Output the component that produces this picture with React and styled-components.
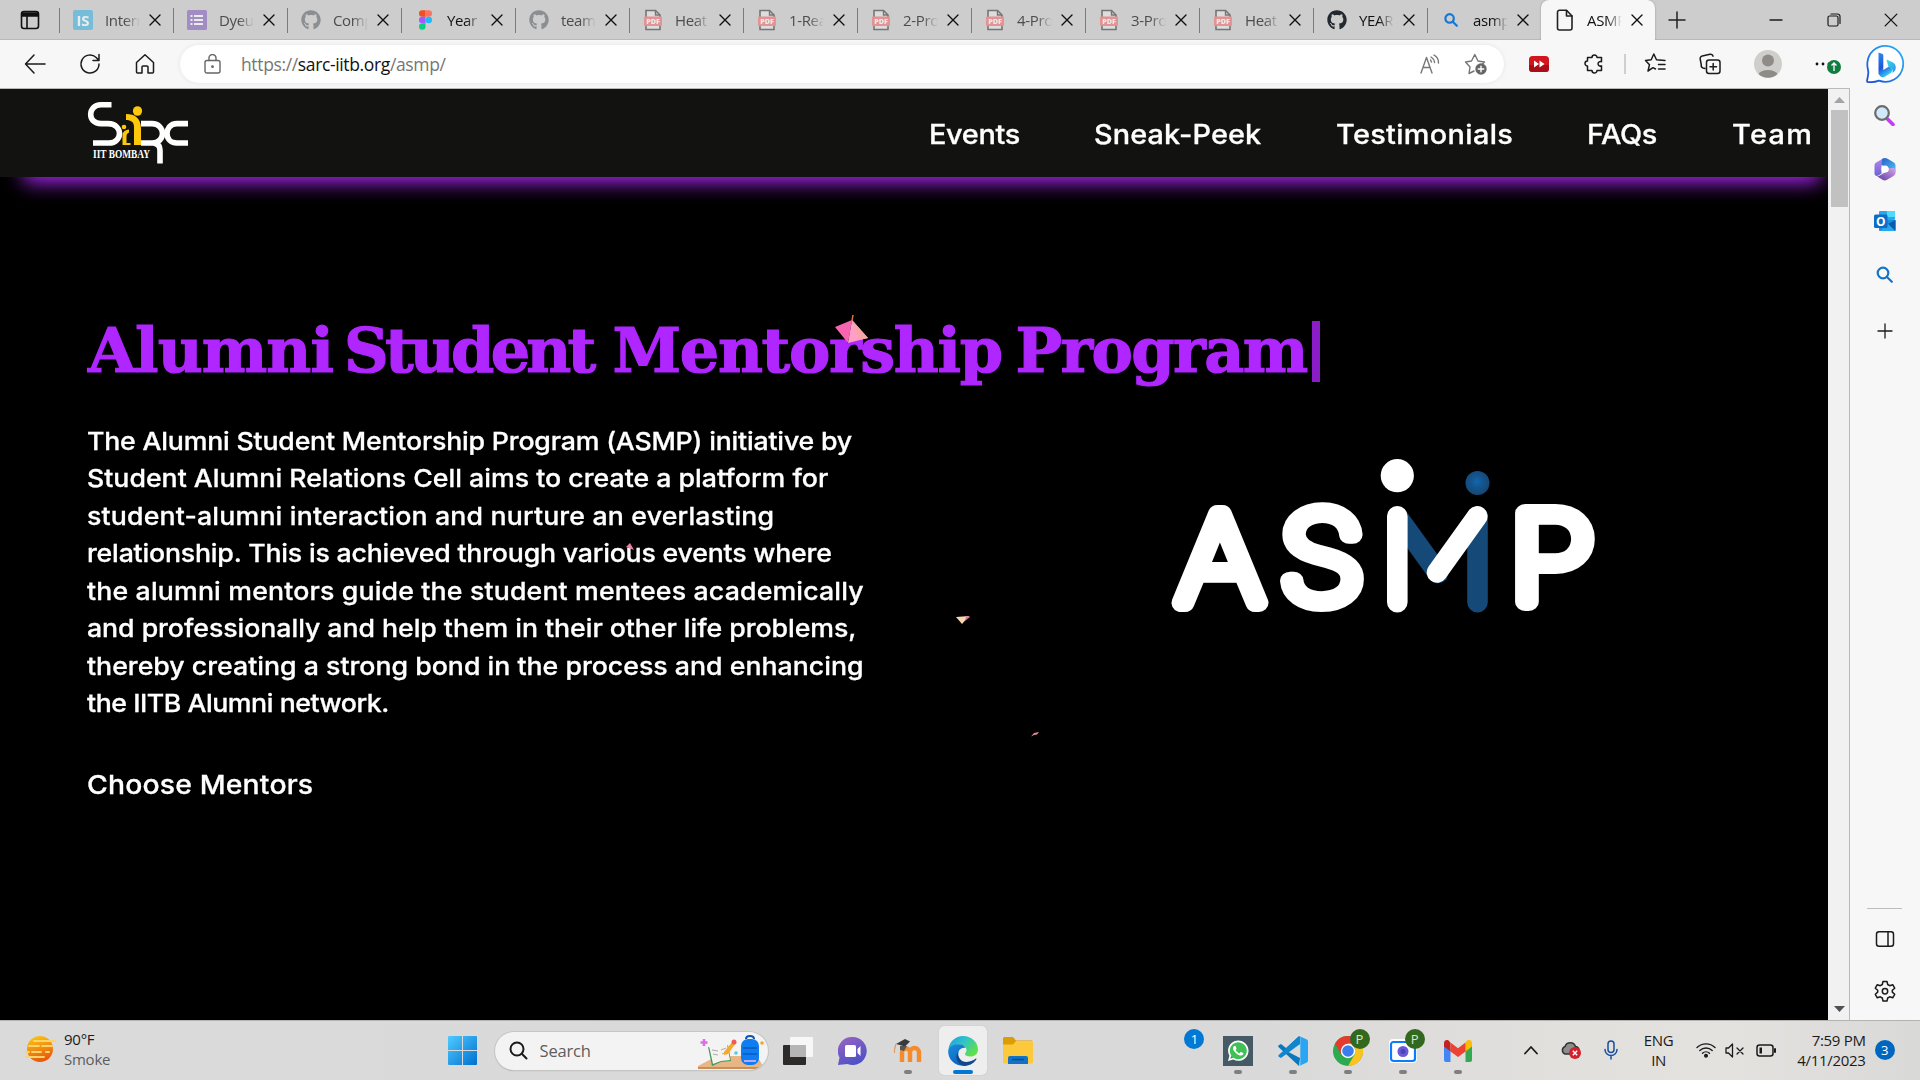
import React from 'react';
import styled, { createGlobalStyle, css } from 'styled-components';
import { FaGithub, FaWhatsapp } from 'react-icons/fa';

const UI = `"Open Sans", "Noto Sans", sans-serif`;
const SITE = `Inter, "Open Sans", sans-serif`;

const Global = createGlobalStyle`
  * { box-sizing: border-box; }
  html, body { margin: 0; padding: 0; }
  body { background: #000; overflow: hidden; font-family: ${UI}; }
  svg { display: block; flex: none; }
`;

/* ---------- window shell ---------- */

const Desktop = styled.div`
  width: 1920px;
  height: 1080px;
  display: flex;
  flex-direction: column;
  overflow: hidden;
`;

const TabStrip = styled.div`
  height: 40px;
  flex: none;
  display: flex;
  background: #cdcdcd;
  box-shadow: inset 0 -1px 0 #b9b9b9;
`;

const TabActions = styled.div`
  width: 59px;
  display: flex;
  align-items: center;
  justify-content: center;
`;

const Tab = styled.div`
  width: 114px;
  height: 40px;
  flex: none;
  display: flex;
  align-items: center;
  padding-left: 14px;
  ${p => p.$active ? css`
    background: #f7f7f7;
    border-radius: 8px 8px 0 0;
    box-shadow: 0 0 2px rgba(0, 0, 0, 0.3);
    clip-path: inset(-4px -4px 0 -4px);
  ` : css`
    background: linear-gradient(#7b7b7b, #7b7b7b) 0 8px / 1px 25px no-repeat;
  `}
`;

const Favicon = styled.div`
  width: 20px;
  height: 20px;
  display: flex;
  align-items: center;
  justify-content: center;
  opacity: ${p => (p.$asleep ? 0.6 : 1)};
`;

const TabTitle = styled.span`
  width: 35px;
  margin: 0 9px 0 12px;
  overflow: hidden;
  white-space: nowrap;
  font-size: 15px;
  line-height: 24px;
  letter-spacing: -0.35px;
  color: ${p => (p.$asleep ? '#4c4c4c' : '#111')};
  mask-image: linear-gradient(90deg, #000 55%, transparent 100%);
`;

const Flex = styled.div`
  flex: 1;
`;

const WindowButton = styled.div`
  width: 57.5px;
  display: flex;
  align-items: center;
  justify-content: center;
`;

const NewTab = styled.div`
  width: 44px;
  display: flex;
  align-items: center;
  justify-content: center;
`;

const Browser = styled.div`
  flex: 1;
  min-height: 0;
  display: flex;
  background: #f7f7f7;
`;

const MainColumn = styled.div`
  width: 1850px;
  display: flex;
  flex-direction: column;
`;

const Toolbar = styled.div`
  height: 48px;
  flex: none;
  display: flex;
  align-items: center;
  padding: 0 0 1px 7.5px;
`;

const ToolSlot = styled.div`
  width: ${p => p.$w || 55}px;
  flex: none;
  display: flex;
  align-items: center;
  justify-content: center;
  position: relative;
`;

const AddressBar = styled.div`
  width: 1324px;
  flex: none;
  height: 38px;
  margin: 0 7.5px 0 7.5px;
  border-radius: 19px;
  background: #fff;
  box-shadow: 0 0 5px rgba(0, 0, 0, 0.08);
  display: flex;
  align-items: center;
  padding: 0 6px 0 24px;
`;

const Url = styled.span`
  margin-left: 20px;
  font-size: 17.5px;
  letter-spacing: -0.36px;
  color: #767676;
  b { font-weight: 400; color: #111; }
`;

const ToolDivider = styled.div`
  width: 2px;
  height: 20px;
  background: #cfcfcf;
`;

const UpdateBadge = styled.div`
  position: absolute;
  left: 30px;
  top: 4px;
`;

/* ---------- page ---------- */

const Viewport = styled.div`
  flex: 1;
  min-height: 0;
  display: flex;
  border: solid #b9b9b9;
  border-width: 1px 1px 0 0;
`;

const Page = styled.div`
  width: 1828px;
  background: #000;
  color: #fff;
  font-family: ${SITE};
  position: relative;
  overflow: hidden;
`;

const SiteHeader = styled.header`
  height: 88px;
  background: #121210;
  box-shadow: 8px 21px 20px -16px #b026ff;
  display: flex;
  align-items: center;
  justify-content: space-between;
  padding: 0 17px 0 86px;
`;

const Nav = styled.nav`
  display: flex;
  gap: 75px;
`;

const wideText = css`
  font-weight: 500;
  -webkit-text-stroke: 0.3px #fff;
  transform: scaleX(1.09);
  transform-origin: left;
  letter-spacing: ${p => p.$ls || 0}px;
`;

const NavLink = styled.a`
  width: ${p => p.$w}px;
  white-space: nowrap;
  font-size: 26.5px;
  line-height: 40px;
  padding-top: 1px;
  ${wideText}
`;

const Hero = styled.main`
  padding: 134px 0 0 87px;
`;

const Title = styled.h1`
  margin: 0;
  height: 80px;
  padding-left: 1px;
  display: flex;
  align-items: center;
  font-family: "DejaVu Serif", serif;
  font-weight: 700;
  font-size: 62px;
  line-height: 80px;
  color: #b026ff;
  -webkit-text-stroke: 1.2px #b026ff;
  white-space: pre;
`;

const TitleWord = styled.span`
  width: ${p => p.$w}px;
  letter-spacing: ${p => p.$ls}px;
`;

const Caret = styled.span`
  width: 8px;
  height: 61px;
  background: #8a1dc8;
`;

const HeroRow = styled.div`
  display: flex;
  justify-content: space-between;
  padding: 32px 232px 0 0;
`;

const Copy = styled.div`
  width: 820px;
`;

const Line = styled.div`
  font-size: 24.5px;
  line-height: 37.45px;
  white-space: nowrap;
  ${wideText}
`;

const Choose = styled.a`
  display: block;
  margin-top: 40px;
  font-size: 26px;
  line-height: 44px;
  ${wideText}
`;

const LogoBox = styled.div`
  padding-top: 33px;
`;

const Confetti = styled.svg`
  position: absolute;
  left: ${p => p.$x}px;
  top: ${p => p.$y}px;
`;

const Scrollbar = styled.div`
  width: 21px;
  background: #f1f1f1;
  display: flex;
  flex-direction: column;
  align-items: center;
  padding: 8px 1px 8px 2px;
`;

const Thumb = styled.div`
  width: 17px;
  height: 97px;
  margin-top: 7px;
  background: #c1c1c1;
`;

const Sidebar = styled.aside`
  flex: 1;
  display: flex;
  flex-direction: column;
  align-items: center;
  padding: 3px 1px 8px 0;
`;

const SideSlot = styled.div`
  height: ${p => p.$h || 53}px;
  display: flex;
  align-items: center;
  justify-content: center;
`;

const SideRule = styled.div`
  width: 35px;
  height: 1px;
  background: #bdbdbd;
`;

/* ---------- taskbar ---------- */

const Taskbar = styled.footer`
  height: 60px;
  flex: none;
  display: flex;
  align-items: center;
  border-top: 1px solid #b5b3b1;
  background: linear-gradient(90deg, #dadada 0%, #d9d9d9 65%, #e2e0dd 82%, #e4e2df 90%, #d9d9d8 100%);
`;

const Weather = styled.div`
  width: 434.5px;
  flex: none;
  padding: 0 0 3px 24px;
  display: flex;
  align-items: center;
  gap: 8px;
`;

const Stack = styled.div`
  display: flex;
  flex-direction: column;
  align-items: ${p => p.$align || 'flex-start'};
  font-size: 15px;
  line-height: 20px;
  letter-spacing: ${p => p.$ls || -0.3}px;
  color: #1b1b1b;
  span + span { color: ${p => p.$second || '#1b1b1b'}; }
`;

const AppSlot = styled.div`
  width: 55.05px;
  height: 59px;
  flex: none;
  display: flex;
  align-items: center;
  justify-content: center;
  position: relative;
`;

const AppTile = styled.div`
  width: 48px;
  height: 49px;
  border-radius: 5px;
  display: flex;
  align-items: center;
  justify-content: center;
  ${p => p.$active && css`background: #eeeeee; box-shadow: 0 0 1px #aaa;`}
`;

const RunMark = styled.div`
  position: absolute;
  bottom: 6px;
  width: ${p => (p.$active ? 20 : 8)}px;
  height: 4px;
  border-radius: 2px;
  background: ${p => (p.$active ? '#0078d4' : '#7f7f7f')};
`;

const Badge = styled.div`
  position: absolute;
  left: 29px;
  top: 8px;
  width: 20px;
  height: 20px;
  border-radius: 50%;
  background: ${p => p.$bg};
  color: ${p => p.$fg || '#fff'};
  font-size: 13px;
  line-height: 20px;
  text-align: center;
`;

const SearchBox = styled.div`
  width: 273px;
  flex: none;
  height: 38px;
  margin: 0 2.5px 0 5px;
  border-radius: 19px;
  background: #f3f3f3;
  box-shadow: 0 0 0 1px #c6c6c6, 0 1px 1px #999;
  display: flex;
  align-items: center;
  padding: 0 4px 0 14px;
  overflow: hidden;
`;

const SearchText = styled.span`
  flex: 1;
  margin-left: 12px;
  font-size: 16.5px;
  letter-spacing: -0.2px;
  color: #5d5d5d;
`;

const Tray = styled.div`
  flex: 1;
  display: flex;
  align-items: center;
  padding-bottom: 1px;
`;

const TraySlot = styled.div`
  width: ${p => p.$w}px;
  flex: none;
  display: flex;
  align-items: center;
  justify-content: ${p => p.$end ? 'flex-end' : 'center'};
`;

const NoticeCount = styled.div`
  width: 20px;
  height: 20px;
  flex: none;
  margin-left: 9px;
  border-radius: 50%;
  background: #0067c0;
  color: #fff;
  font-size: 13px;
  line-height: 20px;
  text-align: center;
`;

/* ---------- icons ---------- */

const Ic = ({ s = 24, w, h, c = '#1b1b1b', sw = 1.5, vb = '0 0 24 24', children }) => (
  <svg width={w || s} height={h || s} viewBox={vb} fill="none" stroke={c} strokeWidth={sw} strokeLinecap="round" strokeLinejoin="round">{children}</svg>
);

const CloseX = ({ s = 12, sw = 1.4, c = '#111' }) => (
  <Ic s={s} vb="0 0 12 12" sw={sw} c={c}><path d="M1 1L11 11M11 1L1 11" /></Ic>
);

const PdfIcon = () => (
  <svg width="20" height="22" viewBox="0 0 20 22">
    <path d="M3 1.5h9.5L17 6v14.5H3z" fill="#e8e8e8" stroke="#3b3b3b" strokeWidth="1.6" />
    <path d="M12.5 1.5V6H17" fill="none" stroke="#3b3b3b" strokeWidth="1.4" />
    <rect x="1" y="7.5" width="18" height="9.5" rx="1" fill="#f26d6d" />
    <text x="10" y="15" textAnchor="middle" fontFamily="Open Sans, sans-serif" fontWeight="800" fontSize="7.2" fill="#fff">PDF</text>
  </svg>
);

const favicons = {
  is: (
    <svg width="20" height="20" viewBox="0 0 20 20">
      <rect width="20" height="20" rx="2" fill="#3db3e3" />
      <text x="10" y="15.5" textAnchor="middle" fontFamily="Open Sans, sans-serif" fontWeight="700" fontSize="15" fill="#fff">IS</text>
    </svg>
  ),
  form: (
    <svg width="20" height="20" viewBox="0 0 20 20">
      <rect width="20" height="20" rx="1.5" fill="#8462bd" />
      <path d="M7 6h9M7 10h9M7 14h9" stroke="#fff" strokeWidth="2" />
      <path d="M3.5 6h2M3.5 10h2M3.5 14h2" stroke="#fff" strokeWidth="2" />
    </svg>
  ),
  github: <FaGithub size={20} color="#60666b" />,
  githubDark: <FaGithub size={20} color="#24292f" />,
  figma: (
    <svg width="13" height="20" viewBox="0 0 12 18">
      <path d="M3 0h3v6H3a3 3 0 0 1 0-6z" fill="#f24e1e" />
      <path d="M6 0h3a3 3 0 0 1 0 6H6z" fill="#ff7262" />
      <path d="M3 6h3v6H3a3 3 0 0 1 0-6z" fill="#a259ff" />
      <circle cx="9" cy="9" r="3" fill="#1abcfe" />
      <path d="M3 12h3v3a3 3 0 1 1-3-3z" fill="#0acf83" />
    </svg>
  ),
  pdf: <PdfIcon />,
  search: <Ic s={14} vb="0 0 14 14" c="#1876d2" sw={2.2}><circle cx="5.6" cy="5.4" r="4.2" /><path d="M8.8 8.8L12.8 12.8" /></Ic>,
  page: <Ic w={18} h={22} vb="0 0 18 22" c="#222" sw={1.6}><path d="M3.5 1.2h7L16 7v12a2 2 0 0 1-2 2H3.500a2 2 0 0 1-2-2V3.200a2 2 0 0 1 2-2z" /><path d="M10.500 1.500V7H16" /></Ic>,
};

const BingLogo = () => (
  <svg width="40" height="40" viewBox="0 0 40 40">
    <defs>
      <linearGradient id="bingRing" x1="0" y1="1" x2="1" y2="0">
        <stop offset="0" stopColor="#1b4ad8" /><stop offset="0.5" stopColor="#2387e8" /><stop offset="1" stopColor="#32b3f2" />
      </linearGradient>
      <linearGradient id="bingB" x1="0" y1="0" x2="0.4" y2="1">
        <stop offset="0" stopColor="#2f8df0" /><stop offset="0.6" stopColor="#1e55dc" /><stop offset="1" stopColor="#38c8f2" />
      </linearGradient>
      <linearGradient id="bingT" x1="0" y1="0" x2="1" y2="1">
        <stop offset="0" stopColor="#34e0e6" /><stop offset="1" stopColor="#2f8ff0" />
      </linearGradient>
    </defs>
    <path d="M20.500 1.800a18 18 0 1 1-6.500 34.900C10.500 38 5.500 38.400 2.300 37.800 1.400 37.600 2.600 35.500 3.200 30 4 27 1.800 24 2.400 18.500A18 18 0 0 1 20.500 1.800z" fill="#fff" stroke="url(#bingRing)" strokeWidth="1.800" />
    <path d="M13.500 8.500l3.500 1.300c.8.300 1.300 1 1.300 1.900V26l6.500-4 2.500 3.500c0 2-.8 3-2 3.800l-6 3.800c-1.200.7-2.300.5-3.500-.3L13.500 30z" fill="url(#bingB)" />
    <path d="M21.500 15.500l6 2.800c2.300 1.200 3.300 3 3.300 5.200 0 2.500-1.500 4.300-3.500 5.300 1-2.700 0-4-2.300-5.200-1-.5-1.500-1-2-2.200z" fill="url(#bingT)" />
  </svg>
);

const M365 = () => (
  <svg width="22" height="24" viewBox="0 0 22 24">
    <defs>
      <linearGradient id="mA" x1="0" y1="0" x2="1" y2="1"><stop offset="0" stopColor="#2c5fc9" /><stop offset="1" stopColor="#49c4f5" /></linearGradient>
      <linearGradient id="mB" x1="0" y1="0" x2="0" y2="1"><stop offset="0" stopColor="#b98ae6" /><stop offset="1" stopColor="#6a62d8" /></linearGradient>
      <linearGradient id="mC" x1="0" y1="1" x2="1" y2="0"><stop offset="0" stopColor="#5b3a9e" /><stop offset="1" stopColor="#d6a5ec" /></linearGradient>
    </defs>
    <path d="M9.500 1.200l-7 4C1 6 .5 7 .5 8.500v8c0 2 2 3 4 2l3-2V9c0-1 .4-2 2-3V1.200z" fill="url(#mB)" />
    <path d="M8 2c2-1.500 4-1.500 6 0l5.500 3.300C21 6.200 21.500 7.200 21.500 9v6L14 11 7.500 8z" fill="url(#mA)" />
    <path d="M21.500 13v2.800c0 1.500-.7 2.400-2 3.100L13 22.800c-1.500.9-3 .9-4.500 0L3 19.300c3 .5 5-3 7-3.300l4.500-2V11c3 .5 6-1 7 2z" fill="url(#mC)" />
    <circle cx="11" cy="12" r="3.600" fill="#fff" />
  </svg>
);

const Outlook = () => (
  <svg width="22" height="22" viewBox="0 0 22 22">
    <rect x="5" y="1" width="16" height="9" rx="1" fill="#28a8ea" />
    <path d="M13 1h7a1 1 0 0 1 1 1v5h-8z" fill="#50d9ff" />
    <path d="M5 10h16.500v10a1 1 0 0 1-1 1H6a1 1 0 0 1-1-1z" fill="#1490df" />
    <path d="M14 14l7.500-4v11z" fill="#0a5ba8" /><path d="M6 21l8-7 7 7z" fill="#28a8ea" />
    <rect x="0" y="4.500" width="13.500" height="13.500" rx="1.500" fill="#0f6cc4" />
    <text x="6.700" y="15.500" textAnchor="middle" fontFamily="Open Sans, sans-serif" fontWeight="700" fontSize="12" fill="#fff">O</text>
  </svg>
);

const SarcLogo = () => (
  <svg width="104" height="66" viewBox="0 0 104 66">
    <g fill="none" stroke="#fff" strokeWidth="5.600">
      <path d="M25.500 4.700H15C8 4.700 4.700 10 4.700 14.500S8 23.600 15 23.600H22C30 23.600 33.500 29 33.500 33.500S30 43 23 43H7" />
      <path d="M55 23.600H66C73 23.600 76.500 29 76.500 33.500S73 43 66 43H55" />
      <path d="M68 43C72 44 74 47 74 50V63.500" />
      <path d="M102 23.600H91C84 23.600 81 29 81 33.500S84 43 91 43H102" />
    </g>
    <g fill="#fdc70c">
      <ellipse cx="51.500" cy="11" rx="4.600" ry="4.800" />
      <path d="M40 14c9 0 15 4 15 15v16h-7V27c0-5-3-7-8-7z" />
      <circle cx="38" cy="27" r="2.300" />
      <path d="M43 29.500v3c-2 1-2.500 2-2.500 4v6.500h4v2h-8V36c0-4 2-6 6.500-6.500z" />
    </g>
    <text x="7" y="57.500" textLength="57" lengthAdjust="spacingAndGlyphs" fontFamily="Liberation Serif, serif" fontWeight="700" fontSize="12" fill="#fff">IIT BOMBAY</text>
  </svg>
);

const AsmpLogo = () => (
  <svg width="427" height="160" viewBox="1169 456 427 160">
    <defs>
      <radialGradient id="head" cx="0.470" cy="0.450" r="0.500"><stop offset="0" stopColor="#0e68ae" /><stop offset="0.600" stopColor="#15528a" /><stop offset="1" stopColor="#154a78" /></radialGradient>
    </defs>
    <g fontFamily="Inter, sans-serif" fontWeight="100" fontSize="123" fill="#fff" stroke="#fff" strokeWidth="18" strokeLinejoin="round" strokeLinecap="round">
      <text x="1177" y="602.500" textLength="86" lengthAdjust="spacingAndGlyphs">A</text>
      <text x="1279.500" y="602" textLength="85" lengthAdjust="spacingAndGlyphs">S</text>
      <text x="1509.500" y="602" textLength="85" lengthAdjust="spacingAndGlyphs">P</text>
    </g>
    <g fill="none" strokeWidth="20.600" strokeLinecap="round">
      <path d="M1397.300 516.500L1438 573M1477.500 516.500V602.300" stroke="#154a78" />
      <path d="M1397.300 516.300V602.300M1477.300 516.300L1437 572.500" stroke="#fff" />
    </g>
    <circle cx="1397.300" cy="475.700" r="16.600" fill="#fff" />
    <circle cx="1477.500" cy="483" r="12" fill="url(#head)" />
  </svg>
);

const Moodle = () => (
  <svg width="32" height="26" viewBox="0 0 32 26">
    <path d="M10 24V14.500a3.800 3.800 0 0 1 8 0V24M18 14.500a4 4 0 0 1 9 0V24" fill="none" stroke="#f58c2b" strokeWidth="4.400" />
    <path d="M4 6l9-5 5 2.500-5 5z" fill="#3a3a3a" /><path d="M8 8v4l4 1 3-5z" fill="#555" />
    <path d="M4 6c-1 3-2 5-1.500 9" stroke="#d89a66" strokeWidth="1.200" fill="none" />
  </svg>
);

const Edge = () => (
  <svg width="30" height="30" viewBox="0 0 30 30">
    <defs>
      <linearGradient id="eTop" x1="0" y1="0" x2="1" y2="0.600"><stop offset="0" stopColor="#1a9de0" /><stop offset="0.500" stopColor="#2fc3c9" /><stop offset="1" stopColor="#62e04a" /></linearGradient>
      <linearGradient id="eL" x1="0" y1="0" x2="0.600" y2="1"><stop offset="0" stopColor="#1b8ddc" /><stop offset="1" stopColor="#0b63bd" /></linearGradient>
    </defs>
    <path d="M.5 13C1.500 5.500 7.500 0 15 0c9 0 15 6.500 15 13.500 0 4.500-3.500 7-7.500 7-3.500 0-5.500-1.300-5.500-2.500 0-1 1.500-1.500 1.500-4 0-3-3-5.500-7-5.500C7 8.500 2.500 10.500.5 13z" fill="url(#eTop)" />
    <path d="M.3 14C1.500 10 6 8.300 11 8.300c4 0 6 2 6.800 3.700-5-1-8.300 3-7.800 8 .5 5 5 9 9.500 9.300C9 32-1 24 .3 14z" fill="url(#eL)" />
    <path d="M10.500 15.500C9 21 13 26 18.500 26c4 0 7.500-2 9-3.200.7-.5 1.300 0 .8.800-3 4.500-8 6.400-12 6.400C10 29 5.500 21.500 10.500 15.500z" fill="#10488f" />
  </svg>
);

const Explorer = () => (
  <svg width="30" height="27" viewBox="0 0 30 27">
    <path d="M0 1.500A1.500 1.500 0 0 1 1.500 0H10l3 3.500H28.500A1.500 1.500 0 0 1 30 5v4H0z" fill="#dd9b04" />
    <path d="M0 7.500h10L13 4h17v21.500a1 1 0 0 1-1 1H1a1 1 0 0 1-1-1z" fill="#fcc93d" />
    <path d="M5 27v-6a2 2 0 0 1 2-2h16a2 2 0 0 1 2 2v6z" fill="#1273c6" /><path d="M9 22.500h12" stroke="#0b4a86" strokeWidth="1.500" />
  </svg>
);

const Chrome = () => (
  <svg width="30" height="30" viewBox="0 0 30 30">
    <circle cx="15" cy="15" r="15" fill="#2da94f" />
    <path d="M15 15L2 7.500A15 15 0 0 1 28 7.500H15z" fill="#e33b2e" /><path d="M2 7.500L8.500 19 15 11V7.500z" fill="#e33b2e" />
    <path d="M28 7.500A15 15 0 0 1 15 30l6.500-11.300L21.500 11 15 7.500z" fill="#fcc31e" />
    <circle cx="15" cy="15" r="7.200" fill="#fff" /><circle cx="15" cy="15" r="5.800" fill="#3b7ded" />
  </svg>
);

const Vscode = () => (
  <svg width="30" height="30" viewBox="0 0 30 30">
    <path d="M21 0L8 12 3 8 .7 9.300c-.7.600-.7 1.300 0 2L21 30l1-8L8.500 15 22 8z" fill="#0b77bd" />
    <path d="M.7 20.700L3 22l19-14V0L.7 19c-.5.500-.5 1.200 0 1.700z" fill="#0f86cf" />
    <path d="M21 0l7.500 3.300c1 .5 1.500 1.200 1.500 2.200v19c0 1-.5 1.700-1.500 2.200L21 30c1-.7 1.300-1.300 1.300-2.500v-25C22.300 1.300 22 .7 21 0z" fill="#2aa5f3" />
  </svg>
);

const Gmail = () => (
  <svg width="28" height="22" viewBox="0 0 28 22">
    <path d="M0 4v16a2 2 0 0 0 2 2h4.500V9z" fill="#4285f4" /><path d="M28 4v16a2 2 0 0 1-2 2h-4.500V9z" fill="#34a853" />
    <path d="M21.500 3v8.500L28 6.500V3.200C28 0 24.500-1 22.500 1z" fill="#fbbc04" />
    <path d="M0 3.200v3.300l6.500 5V3l-1-1.500C3.500-1 0 0 0 3.200z" fill="#c5221f" />
    <path d="M6.500 2.500L14 8.200l7.500-5.700v9L14 17l-7.500-5.500z" fill="#ea4335" />
  </svg>
);

const SearchArt = () => (
  <svg width="66" height="38" viewBox="0 0 66 38">
    <path d="M0 34l19-10h40l6 10v3H0z" fill="#e7b684" /><path d="M0 35h63v2H0z" fill="#c98d58" />
    <path d="M10 15l11 3 9-5 3 16-10 1-9 4z" fill="#3e9a5c" /><path d="M11 14l10 3 8-5 3 16-9 1-8 3z" fill="#f4f3ef" />
    <path d="M14 18l6 1M15 22l5 1M23 18l5-2M24 22l5-2" stroke="#aaa" strokeWidth="1" />
    <path d="M26 20L35 9l3 2-8 11-4 1z" fill="#f8a72d" /><circle cx="36" cy="10" r="2.500" fill="#ef5b5b" />
    <rect x="43" y="7" width="18" height="26" rx="7" fill="#0f7df0" /><path d="M48 7c0-4 8-4 8 0" stroke="#0b56b8" strokeWidth="2" fill="none" />
    <path d="M45 22h14M45 16h14" stroke="#075ac0" strokeWidth="1.500" /><path d="M46 29h12" stroke="#b9a6ff" strokeWidth="2" />
    <path d="M6 7v7M2.500 10.500h7" stroke="#dd6ce8" strokeWidth="2.500" /><circle cx="38" cy="21" r="1.800" fill="#50cde0" /><circle cx="64" cy="11" r="1.800" fill="#f5a623" />
  </svg>
);

const ArrowTri = ({ down, c }) => (
  <svg width="11" height="6" viewBox="0 0 11 6"><path d={down ? 'M0 0h11L5.500 6z' : 'M0 6h11L5.500 0z'} fill={c} /></svg>
);

const tabs = [
  ['is', 'Intern', 1], ['form', 'Dyeu', 1], ['github', 'Comp', 1], ['figma', 'Year', 0], ['github', 'team', 1],
  ['pdf', 'Heat', 1], ['pdf', '1-Rea', 1], ['pdf', '2-Pro', 1], ['pdf', '4-Pro', 1], ['pdf', '3-Pro', 1], ['pdf', 'Heat', 1],
  ['githubDark', 'YEAR', 0], ['search', 'asmp', 0],
];

const titleWords = [
  ['Alumni ', 256, -1],
  ['Student ', 268.5, -3.8],
  ['Mentorship ', 403, -1.35],
  ['Program', 296.5, -1.6],
];

const copy = [
  ['The Alumni Student Mentorship Program (ASMP) initiative by', -0.18],
  ['Student Alumni Relations Cell aims to create a platform for', 0],
  ['student-alumni interaction and nurture an everlasting', 0.15],
  ['relationship. This is achieved through various events where', -0.185],
  ['the alumni mentors guide the student mentees academically', 0.14],
  ['and professionally and help them in their other life problems,', -0.05],
  ['thereby creating a strong bond in the process and enhancing', 0],
  ['the IITB Alumni network.', -0.42],
];

const App = () => (
  <Desktop>
    <Global />
    <TabStrip>
      <TabActions>
        <Ic s={20} vb="0 0 20 20" sw={1.6} c="#111"><rect x="1.500" y="1.500" width="17" height="17" rx="2.500" /><path d="M2 3h16v3H2z" fill="#111" /><path d="M7 6v12" /></Ic>
      </TabActions>
      {tabs.map(([icon, title, asleep], i) => (
        <Tab key={i}>
          <Favicon $asleep={asleep}>{favicons[icon]}</Favicon>
          <TabTitle $asleep={asleep}>{title}</TabTitle>
          <CloseX />
        </Tab>
      ))}
      <Tab $active>
        <Favicon>{favicons.page}</Favicon>
        <TabTitle>ASMP</TabTitle>
        <CloseX />
      </Tab>
      <NewTab><Ic s={18} vb="0 0 18 18" c="#222" sw={1.5}><path d="M9 1v16M1 9h16" /></Ic></NewTab>
      <Flex />
      <WindowButton><Ic s={14} vb="0 0 14 14" sw={1.3}><path d="M1 7h12" /></Ic></WindowButton>
      <WindowButton><Ic s={14} vb="0 0 14 14" sw={1.2}><rect x="1" y="3" width="10" height="10" rx="1.500" /><path d="M4 1h6.500A2.500 2.500 0 0 1 13 3.500V10.500" /></Ic></WindowButton>
      <WindowButton><CloseX s={14} sw={1.1} /></WindowButton>
    </TabStrip>

    <Browser>
      <MainColumn>
        <Toolbar>
          <ToolSlot><Ic s={22} vb="0 0 22 22"><path d="M21 11H1.500M10 2L1.500 11l8.500 9" /></Ic></ToolSlot>
          <ToolSlot><Ic s={22} vb="0 0 22 22"><path d="M20 11a9 9 0 1 1-2.800-6.500L19.500 7M20 1.500V7.500H14" /></Ic></ToolSlot>
          <ToolSlot><Ic s={22} vb="0 0 22 22"><path d="M2.500 9.500L11 1.800l8.500 7.700V19a1 1 0 0 1-1 1H14v-6a1 1 0 0 0-1-1H9a1 1 0 0 0-1 1v6H3.500a1 1 0 0 1-1-1z" /></Ic></ToolSlot>
          <AddressBar>
            <Ic w={17} h={20} vb="0 0 17 20" c="#666" sw={1.4}><rect x="1" y="6.500" width="15" height="12.500" rx="2" /><path d="M5 6.500V4a3.500 3.500 0 0 1 7 0v2.500" /><circle cx="8.500" cy="12.700" r="0.700" fill="#666" /></Ic>
            <Url>https://<b>sarc-iitb.org</b>/asmp/</Url>
            <Flex />
            <ToolSlot $w={44}><Ic s={20} vb="0 0 20 20" c="#767676" sw={1.4}><path d="M1 19L6.500 3.500 12 19M3 13.500h7M11 3a7 7 0 0 1 3.500 5.500M14 1a9 9 0 0 1 4.500 8M10.500 6l1 2" /></Ic></ToolSlot>
            <ToolSlot $w={46}>
              <Ic w={23} h={22} vb="0 0 23 22" c="#767676" sw={1.4}><path d="M10 18L5 20.500l1-6.500L1.500 9l6-1L10.800 1.500 14 8l6.500 1-2 2" /><circle cx="17" cy="16" r="5" fill="#666" stroke="#666" /><path d="M17 13.300v5.400M14.300 16h5.400" stroke="#fff" /></Ic>
            </ToolSlot>
          </AddressBar>
          <ToolSlot>
            <svg width="20" height="16" viewBox="0 0 20 16"><rect width="20" height="16" rx="3.500" fill="#d0161f" /><path d="M0 9h20v3.500A3.500 3.500 0 0 1 16.500 16h-13A3.500 3.500 0 0 1 0 12.500z" fill="#a90d16" /><path d="M5 4.500L10 8l-5 3.500zM10.500 4.500l5 3.500-5 3.500z" fill="#fff" /></svg>
          </ToolSlot>
          <ToolSlot><Ic s={21} vb="0 0 21 21"><path d="M3.500 4.500H8a2.500 2.500 0 0 1 5 0h4.500v4.300a2.300 2.300 0 1 0 0 4V17.500H13a2.500 2.500 0 0 1-5 0H3.500V13a2.500 2.500 0 0 1 0-5z" /></Ic></ToolSlot>
          <ToolSlot $w={7}><ToolDivider /></ToolSlot>
          <ToolSlot $w={52}><Ic s={22} vb="0 0 22 22"><path d="M11.500 16L9 14.700 4 18l1.500-6.300L1.500 7.500l5.700-.8L9.800 1l2.700 5.700L21 7.500M14.500 11.500H21M14.500 16H21" /></Ic></ToolSlot>
          <ToolSlot $w={58}><Ic s={22} vb="0 0 22 22"><rect x="7.500" y="7" width="13.500" height="13.500" rx="2.500" /><path d="M14.200 10.500v6.500M11 13.800h6.500M6 15.500L4 15a2.500 2.500 0 0 1-1.700-3L1.200 6a2.500 2.500 0 0 1 2-3L11 1.200a2.500 2.500 0 0 1 3 2" /></Ic></ToolSlot>
          <ToolSlot $w={58}>
            <svg width="28" height="28" viewBox="0 0 28 28"><circle cx="14" cy="14" r="14" fill="#d0cecb" /><circle cx="14" cy="10.500" r="6" fill="#8f8b87" /><path d="M4.500 24a10.500 7 0 0 1 19 0A14 14 0 0 1 4.500 24z" fill="#8f8b87" /></svg>
          </ToolSlot>
          <ToolSlot $w={53}>
            <Ic s={16} vb="0 0 16 16" sw={0}><circle cx="2" cy="8" r="1.400" fill="#111" /><circle cx="8" cy="8" r="1.400" fill="#111" /><circle cx="14" cy="8" r="1.400" fill="#111" /></Ic>
            <UpdateBadge><svg width="14" height="14" viewBox="0 0 14 14"><circle cx="7" cy="7" r="7" fill="#107c41" /><path d="M7 11V3.500M4.500 5.500L7 3l2.500 2.500" stroke="#fff" strokeWidth="1.300" fill="none" /></svg></UpdateBadge>
          </ToolSlot>
        </Toolbar>

        <Viewport>
          <Page>
            <SiteHeader>
              <SarcLogo />
              <Nav>
                <NavLink $w={90} $ls={-0.3}>Events</NavLink>
                <NavLink $w={167} $ls={0.1}>Sneak-Peek</NavLink>
                <NavLink $w={176} $ls={0.3}>Testimonials</NavLink>
                <NavLink $w={70} $ls={-0.4}>FAQs</NavLink>
                <NavLink $w={79} $ls={1.2}>Team</NavLink>
              </Nav>
            </SiteHeader>
            <Hero>
              <Title>
                {titleWords.map(([word, w, ls]) => <TitleWord key={word} $w={w} $ls={ls}>{word}</TitleWord>)}
                <Caret />
              </Title>
              <HeroRow>
                <Copy>
                  {copy.map(([t, ls]) => <Line key={t} $ls={ls}>{t}</Line>)}
                  <Choose $ls={0.16}>Choose Mentors</Choose>
                </Copy>
                <LogoBox><AsmpLogo /></LogoBox>
              </HeroRow>
            </Hero>
            <Confetti $x={834} $y={226} width="36" height="30" viewBox="0 0 36 30">
              <path d="M18 5L1 12l13 16z" fill="#f765b0" /><path d="M18 5l16 18-20 5z" fill="#ff9fc8" /><path d="M18 5l16 18-9 2z" fill="#f9a5a8" /><path d="M19 0l-1 6" stroke="#d9783c" strokeWidth="1.500" />
            </Confetti>
            <Confetti $x={625} $y={453} width="10" height="10" viewBox="0 0 10 10"><path d="M5 1l4 7-8-3z" fill="#ef7fa4" /></Confetti>
            <Confetti $x={955} $y={526} width="16" height="10" viewBox="0 0 16 10"><path d="M1 2l13-1-7 8z" fill="#f7d7b0" /><path d="M14 1l1 1-5 4 1-4z" fill="#e06bb4" /></Confetti>
            <Confetti $x={1030} $y={642} width="10" height="7" viewBox="0 0 10 7"><path d="M1 5.500l3-3.500 5-1-2 2.500-3 .5z" fill="#e58a9c" /></Confetti>
          </Page>
          <Scrollbar>
            <ArrowTri c="#a3a3a3" />
            <Thumb />
            <Flex />
            <ArrowTri down c="#505050" />
          </Scrollbar>
        </Viewport>
      </MainColumn>

      <Sidebar>
        <SideSlot $h={42}><BingLogo /></SideSlot>
        <SideSlot $h={60}>
          <svg width="22" height="22" viewBox="0.500 -1 22 22"><path d="M14 14l5.500 5.500" stroke="#c13df2" strokeWidth="3.600" strokeLinecap="round" /><circle cx="8.500" cy="8" r="6.800" fill="#cfe9fb" stroke="#6b6b6b" strokeWidth="2.200" /></svg>
        </SideSlot>
        <SideSlot $h={48}><M365 /></SideSlot>
        <SideSlot $h={56}><Outlook /></SideSlot>
        <SideSlot $h={50}><Ic s={17} vb="0 0 17 17" c="#1474c8" sw={2.2}><circle cx="7" cy="7" r="5.300" /><path d="M11 11l4.800 4.800" /></Ic></SideSlot>
        <SideSlot $h={63}><Ic s={16} vb="0 0 16 16" sw={1.3}><path d="M8 1v14M1 8h14" /></Ic></SideSlot>
        <Flex />
        <SideRule />
        <SideSlot $h={60}><Ic s={20} vb="0 0 20 20"><rect x="1.500" y="2.800" width="17" height="14.500" rx="2.500" /><path d="M13 3v14" /></Ic></SideSlot>
        <SideSlot $h={43}>
          <Ic s={22} vb="0 0 22 22"><path d="M9 1.500h4l.7 3 2 1.200 3-1 2 3.500L18.300 10.300v1.800l2.400 2.200-2 3.500-3-1-2 1.200-.7 3H9l-.7-3-2-1.200-3 1-2-3.500 2.400-2.200v-1.800L1.300 8.200l2-3.500 3 1 2-1.200z" /><circle cx="11" cy="11.200" r="2.700" /></Ic>
        </SideSlot>
      </Sidebar>
    </Browser>

    <Taskbar>
      <Weather>
        <svg width="32" height="28" viewBox="0 0 32 28">
          <defs><linearGradient id="sun" x1="0" y1="0" x2="0.300" y2="1"><stop offset="0" stopColor="#fbcd16" /><stop offset="1" stopColor="#ea5b0c" /></linearGradient></defs>
          <circle cx="16" cy="14" r="13" fill="url(#sun)" />
          <path d="M10 6h21M5 11h10M18 11h10M8 17h9M22 17h3M2 17h3M2 22h18" stroke="#fbd46a" strokeWidth="1.800" strokeLinecap="round" />
        </svg>
        <Stack $second="#5d5d5d" $ls={-0.25}><span>90°F</span><span>Smoke</span></Stack>
      </Weather>
      <AppSlot>
        <svg width="29" height="29" viewBox="0 0 29 29">
          <defs><linearGradient id="win" x1="0" y1="0" x2="1" y2="1"><stop offset="0" stopColor="#4fcbff" /><stop offset="1" stopColor="#0070d0" /></linearGradient></defs>
          <path d="M1 0h13v14H0V1a1 1 0 0 1 1-1zM15 0h13a1 1 0 0 1 1 1v13H15zM0 15h14v14H1a1 1 0 0 1-1-1zM15 15h14v13a1 1 0 0 1-1 1H15z" fill="url(#win)" />
        </svg>
      </AppSlot>
      <SearchBox>
        <Ic s={19} vb="0 0 19 19" sw={2}><circle cx="8" cy="8" r="6.500" /><path d="M12.800 12.800l4.700 4.700" /></Ic>
        <SearchText>Search</SearchText>
        <SearchArt />
      </SearchBox>
      <AppSlot>
        <svg width="30" height="28" viewBox="0 0 30 28"><rect x="0" y="8" width="23" height="20" rx="1" fill="#2c2b2a" /><rect x="7" y="0" width="23" height="20" rx="1" fill="#f7f7f7" /><path d="M7 8h16v12H7z" fill="#b5b5b5" /></svg>
      </AppSlot>
      <AppSlot>
        <svg width="29" height="28" viewBox="0 0 29 28">
          <defs><linearGradient id="chat" x1="0" y1="0" x2="0.500" y2="1"><stop offset="0" stopColor="#9a63c4" /><stop offset="1" stopColor="#4f52c6" /></linearGradient></defs>
          <path d="M14.500 0a14 14 0 1 1-5 27L0 28l1.500-7.500A14 14 0 0 1 14.500 0z" fill="url(#chat)" /><rect x="7" y="8" width="11" height="12" rx="1.500" fill="#fff" /><path d="M19.500 12l3-3v10l-3-3z" fill="#fff" />
        </svg>
      </AppSlot>
      <AppSlot><Moodle /><RunMark /></AppSlot>
      <AppSlot><AppTile $active><Edge /></AppTile><RunMark $active /></AppSlot>
      <AppSlot><Explorer /></AppSlot>
      <AppSlot /><AppSlot />
      <AppSlot><Badge $bg="#0078d4">1</Badge></AppSlot>
      <AppSlot>
        <svg width="30" height="30" viewBox="0 0 30 30">
          <rect width="30" height="30" fill="#455a64" /><circle cx="15.300" cy="14.700" r="9.500" fill="#3fc155" />
          <g transform="translate(3.500 3)"><FaWhatsapp size={23.500} color="#fff" /></g>
        </svg>
        <RunMark />
      </AppSlot>
      <AppSlot><Vscode /><RunMark /></AppSlot>
      <AppSlot><Chrome /><Badge $bg="#33691e" $fg="#d8e6cf">P</Badge><RunMark /></AppSlot>
      <AppSlot>
        <svg width="28" height="24" viewBox="0 0 28 24"><rect width="28" height="24" rx="4" fill="#fff" /><rect x="2" y="3" width="24" height="19" rx="2.500" fill="#fff" stroke="#0a7cff" strokeWidth="2.200" /><circle cx="14" cy="12.500" r="5.500" fill="#6d59d8" /><circle cx="14" cy="12.500" r="2.500" fill="#4348b8" /></svg>
        <Badge $bg="#33691e" $fg="#d8e6cf">P</Badge><RunMark />
      </AppSlot>
      <AppSlot><Gmail /><RunMark /></AppSlot>
      <Tray>
        <TraySlot $w={52} $end><Ic s={14} vb="0 0 14 14" sw={1.8}><path d="M1 10.500L7 4l6 6.500" /></Ic></TraySlot>
        <TraySlot $w={43} $end>
          <svg width="21" height="18" viewBox="0 0 21 18"><path d="M5 13a4 4 0 0 1 0-7.500 5.500 5.500 0 0 1 10.500 0A4 4 0 0 1 17 13z" fill="#8d8d8d" stroke="#333" strokeWidth="1.500" /><circle cx="15" cy="12" r="6" fill="#d3202c" /><path d="M12.800 9.800l4.400 4.400M17.200 9.800l-4.400 4.400" stroke="#fff" strokeWidth="1.400" /></svg>
        </TraySlot>
        <TraySlot $w={37} $end><Ic w={14} h={20} vb="0 0 14 20" c="#1a4fa0" sw={1.5}><rect x="4" y="1" width="6" height="11.500" rx="3" /><path d="M1 9.500a6 6 0 0 0 12 0M7 15.500V19" /></Ic></TraySlot>
        <TraySlot $w={82}><Stack $align="center"><span>ENG</span><span>IN</span></Stack></TraySlot>
        <TraySlot $w={12}>
          <Ic w={20} h={16} vb="0 0 20 16" sw={1.4}><path d="M1 5.500a13 13 0 0 1 18 0M3.800 8.500a9 9 0 0 1 12.400 0M6.500 11.300a5 5 0 0 1 7 0" /><circle cx="10" cy="13.800" r="1.300" fill="#1b1b1b" /></Ic>
        </TraySlot>
        <TraySlot $w={46}><Ic w={19} h={15} vb="0 0 19 15" sw={1.3}><path d="M1 5h2.500L7.500 1v13L3.500 10H1zM12 5l6 6M18 5l-6 6" /></Ic></TraySlot>
        <TraySlot $w={16}><Ic w={20} h={13} vb="0 0 20 13" sw={1.5}><rect x="1" y="1" width="16" height="11" rx="2.500" /><path d="M19 5v3" strokeWidth="2" /><rect x="3.500" y="3.500" width="2.500" height="6" fill="#1b1b1b" stroke="none" /></Ic></TraySlot>
        <TraySlot $w={92} $end><Stack $align="flex-end"><span>7:59 PM</span><span>4/11/2023</span></Stack></TraySlot>
        <NoticeCount>3</NoticeCount>
      </Tray>
    </Taskbar>
  </Desktop>
);

export default App;
